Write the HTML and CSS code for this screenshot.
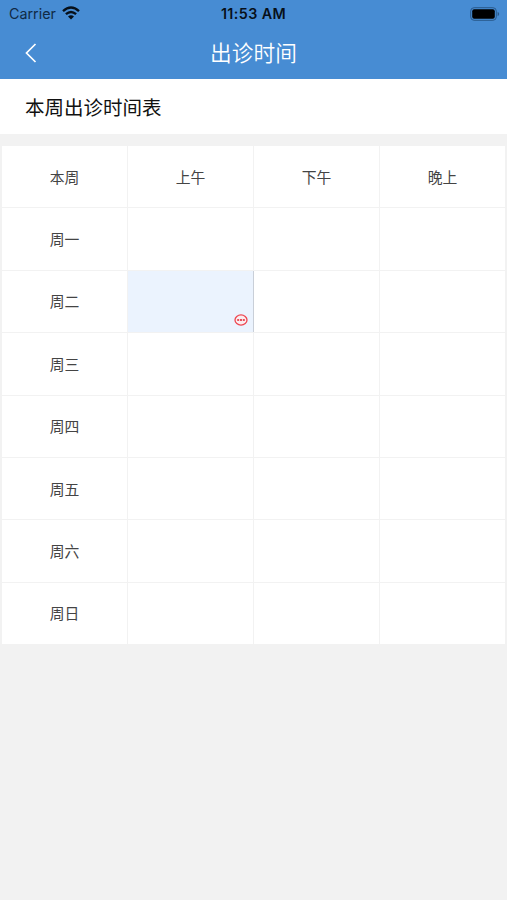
FILE: index.html
```html
<!DOCTYPE html>
<html lang="zh-CN">
<head>
<meta charset="utf-8">
<title>出诊时间</title>
<link rel="stylesheet" href="styles.css">
</head>
<body>
<header class="header">
  <div class="status">
    <div class="carrier"><span>Carrier</span>
      <svg class="wifi" viewBox="0 0 18 14" width="18" height="14"><g fill="none" stroke="#07101a" stroke-width="2.4"><path d="M1 5.1Q9-2 17 5.1"/><path d="M3.9 8.2Q9 3.7 14.1 8.2"/></g><path d="M6 10.5Q9 8.1 12 10.5L9 13.6Z" fill="#07101a"/></svg>
    </div>
    <div class="time">11:53 AM</div>
    <svg class="battery" viewBox="0 0 30 14" width="30" height="14"><rect x=".7" y=".7" width="25.6" height="12.6" rx="3.4" fill="none" stroke="#29598b"/><rect x="2.2" y="2.2" width="22.6" height="9.6" rx="2" fill="#000"/><path d="M27.6 4.8Q29.2 5.5 29.2 7T27.6 9.2Z" fill="#29598b"/></svg>
  </div>
  <nav class="nav">
    <svg class="back" viewBox="0 0 12 20" width="12" height="20"><path d="M10.5 1 1.5 10l9 9" fill="none" stroke="#fff" stroke-width="1.7"/></svg>
    <h1 class="title">出诊时间</h1>
  </nav>
</header>
<h2 class="subtitle">本周出诊时间表</h2>
<main class="schedule">
  <div class="cell">本周</div><div class="cell">上午</div><div class="cell">下午</div><div class="cell">晚上</div>
  <div class="cell">周一</div><div class="cell"></div><div class="cell"></div><div class="cell"></div>
  <div class="cell">周二</div>
  <div class="cell selected"><svg class="mark" viewBox="0 0 14 12" width="14" height="12"><ellipse cx="7" cy="6" rx="6" ry="5.1" fill="#fbecef" stroke="#ee4650" stroke-width="1.3"/><path d="M3.2 6h7.6" stroke="#e8515c" stroke-width="2" stroke-dasharray="2 .8"/></svg></div>
  <div class="cell"></div><div class="cell"></div>
  <div class="cell">周三</div><div class="cell"></div><div class="cell"></div><div class="cell"></div>
  <div class="cell">周四</div><div class="cell"></div><div class="cell"></div><div class="cell"></div>
  <div class="cell">周五</div><div class="cell"></div><div class="cell"></div><div class="cell"></div>
  <div class="cell">周六</div><div class="cell"></div><div class="cell"></div><div class="cell"></div>
  <div class="cell">周日</div><div class="cell"></div><div class="cell"></div><div class="cell"></div>
</main>
</body>
</html>
```
FILE: styles.css
```css
* { box-sizing: border-box; }
body {
  margin: 0;
  min-height: 900px;
  background: #f2f2f2;
  font-family: Inter, "Noto Sans CJK SC", sans-serif;
}
.header { height: 79px; background: #478cd3; }
.status {
  display: grid;
  grid-template-columns: 1fr auto 1fr;
  align-items: center;
  height: 27px;
  padding: 0 7px 0 9px;
  color: #07101a;
}
.carrier { display: flex; align-items: center; gap: 6px; font-size: 14.3px; color: #102a45; }
.wifi { margin-top: -1px; }
.time { margin-left: -2px; font-size: 14.3px; font-weight: 600; letter-spacing: .4px; }
.battery { justify-self: end; }
.nav {
  display: grid;
  grid-template-columns: 60px 1fr 60px;
  align-items: center;
  height: 52px;
}
.back { margin-left: 25px; }
.title {
  margin: 0;
  color: #fff;
  font-size: 21.7px;
  font-weight: 350;
  line-height: 32px;
  text-align: center;
}
.subtitle {
  height: 55px;
  margin: 0;
  padding: 2px 0 0 25px;
  background: #fff;
  color: #111;
  font-size: 19.5px;
  font-weight: 400;
  line-height: 55px;
}
.schedule {
  display: grid;
  grid-template-columns: repeat(4, 125px);
  grid-template-rows: repeat(8, 1fr);
  gap: 1px;
  height: 498px;
  margin: 12px 2px 0;
}
.cell {
  display: flex;
  align-items: center;
  justify-content: center;
  padding-top: 2px;
  background: #fff;
  color: #444;
  font-size: 14.8px;
  line-height: 22px;
}
.selected {
  align-items: flex-end;
  justify-content: flex-end;
  padding: 0 5px 6px 0;
  background: #ebf3fe;
  box-shadow: 1px 0 #c9cfd8;
}
```
